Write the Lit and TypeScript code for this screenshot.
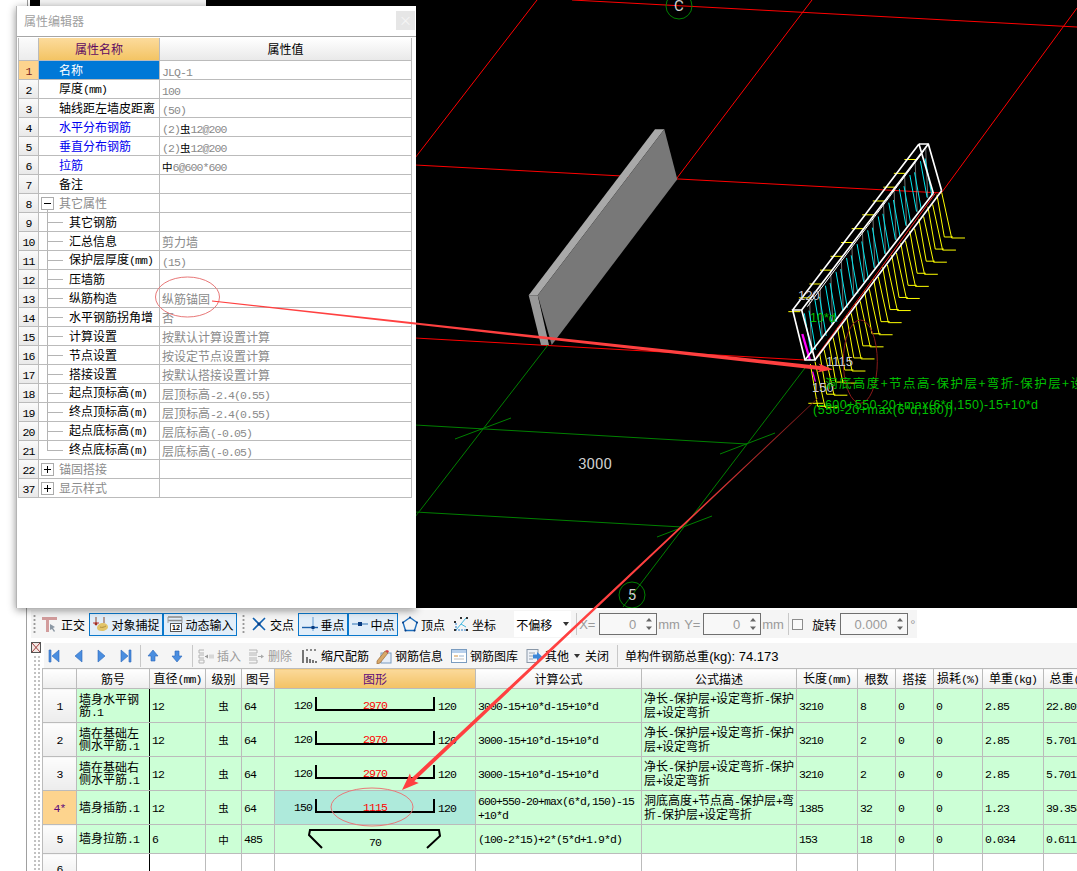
import { LitElement, html, css, svg } from "lit";
import { customElement } from "lit/decorators.js";

const t = (s: string) =>
  s
    .split(/([\x20-\x7e]+)/)
    .filter(Boolean)
    .map((p) => (/^[\x20-\x7e]/.test(p) ? html`<span class="l">${p}</span>` : p));

const rebar = (s: string) =>
  s
    .split(/([虫中]|[\x20-\x7e]+)/)
    .filter(Boolean)
    .map((p) =>
      p === "虫" || p === "中"
        ? html`<span class="g">${p}</span>`
        : /^[\x20-\x7e]/.test(p)
        ? html`<span class="l">${p}</span>`
        : p
    );

const base = css`
  * {
    box-sizing: border-box;
  }
  .l {
    font-family: "Liberation Mono", monospace;
    font-size: 11.5px;
    letter-spacing: -0.9px;
  }
  .g {
    color: #000;
    font-size: 10.5px;
  }
`;

/* ---------- property editor window ---------- */
type PropRow = { n: number; name: string; value?: string; kind?: string; tree?: string };

const PROPS: PropRow[] = [
  { n: 1, name: "名称", value: "JLQ-1", kind: "sel" },
  { n: 2, name: "厚度(mm)", value: "100" },
  { n: 3, name: "轴线距左墙皮距离", value: "(50)" },
  { n: 4, name: "水平分布钢筋", value: "(2)虫12@200", kind: "blue" },
  { n: 5, name: "垂直分布钢筋", value: "(2)虫12@200", kind: "blue" },
  { n: 6, name: "拉筋", value: "中6@600*600", kind: "blue" },
  { n: 7, name: "备注" },
  { n: 8, name: "其它属性", kind: "group", tree: "minus" },
  { n: 9, name: "其它钢筋", tree: "child" },
  { n: 10, name: "汇总信息", value: "剪力墙", tree: "child" },
  { n: 11, name: "保护层厚度(mm)", value: "(15)", tree: "child" },
  { n: 12, name: "压墙筋", tree: "child" },
  { n: 13, name: "纵筋构造", value: "纵筋锚固", tree: "child" },
  { n: 14, name: "水平钢筋拐角增", value: "否", tree: "child" },
  { n: 15, name: "计算设置", value: "按默认计算设置计算", tree: "child" },
  { n: 16, name: "节点设置", value: "按设定节点设置计算", tree: "child" },
  { n: 17, name: "搭接设置", value: "按默认搭接设置计算", tree: "child" },
  { n: 18, name: "起点顶标高(m)", value: "层顶标高-2.4(0.55)", tree: "child" },
  { n: 19, name: "终点顶标高(m)", value: "层顶标高-2.4(0.55)", tree: "child" },
  { n: 20, name: "起点底标高(m)", value: "层底标高(-0.05)", tree: "child" },
  { n: 21, name: "终点底标高(m)", value: "层底标高(-0.05)", tree: "last" },
  { n: 22, name: "锚固搭接", kind: "group", tree: "plus" },
  { n: 37, name: "显示样式", kind: "group", tree: "plus" },
];

@customElement("prop-editor")
export class PropEditor extends LitElement {
  static styles = [
    base,
    css`
      :host {
        display: block;
        width: 399px;
        height: 602px;
        background: #fff;
        border-left: 1px solid #b4b4b4;
        box-shadow: 0 2px 8px rgba(0, 0, 0, 0.45);
        font: 12px "Noto Sans CJK SC", sans-serif;
        color: #000;
      }
      .title {
        height: 31px;
        display: flex;
        align-items: center;
        justify-content: space-between;
        padding: 0 1px 1px 7px;
        color: #a0a0a0;
        border-bottom: 1px solid #a6a6a6;
      }
      .close {
        width: 19px;
        height: 19px;
        background: #e6e6e6;
        color: #f6f6f6;
        text-align: center;
        line-height: 18px;
        font-size: 13px;
      }
      .grid {
        margin: 1px 0 0 1px;
        width: 394px;
        border-left: 1px solid #bbb;
      }
      .row {
        display: grid;
        grid-template-columns: 20px 121px 252px;
        height: 19px;
        border-bottom: 1px solid #bbb;
        line-height: 20px;
      }
      .row > div {
        border-right: 1px solid #bbb;
        white-space: nowrap;
        overflow: hidden;
      }
      .head {
        height: 23px;
        line-height: 22px;
        text-align: center;
      }
      .head .num {
        background: linear-gradient(#fbfbfb, #ececec);
      }
      .head .on {
        background: linear-gradient(#fcdb9c, #f3c464);
        color: #5e0a62;
      }
      .head .val {
        background: linear-gradient(#fff, #e9e9e9);
      }
      .num {
        background: linear-gradient(#fafafa, #e9e9e9);
        text-align: center;
        line-height: 18px;
      }
      .num.sel {
        background: #fdd48e;
        color: #7a1f1f;
      }
      .name {
        padding-left: 20px;
        display: flex;
        align-items: center;
      }
      .name.sel {
        background: #0078d7;
        color: #fff;
      }
      .name.blue {
        color: #0000f0;
      }
      .name.group {
        padding-left: 2px;
        color: #8c8c8c;
      }
      .name.child,
      .name.last {
        padding-left: 30px;
        background: linear-gradient(#b4b4b4, #b4b4b4) 8px 0 / 1px 100% no-repeat,
          linear-gradient(#b4b4b4, #b4b4b4) 8px 50% / 16px 1px no-repeat;
      }
      .name.last {
        background: linear-gradient(#b4b4b4, #b4b4b4) 8px 0 / 1px 50% no-repeat,
          linear-gradient(#b4b4b4, #b4b4b4) 8px 50% / 16px 1px no-repeat;
      }
      .name.minus {
        background: linear-gradient(#b4b4b4, #b4b4b4) 8px 100% / 1px 4px no-repeat;
      }
      .box {
        width: 13px;
        height: 13px;
        margin-right: 5px;
        background: #fff;
        border: 1px solid #ababab;
        flex: none;
      }
      .box svg {
        display: block;
      }
      .value {
        padding-left: 2px;
        color: #8a8a8a;
      }
    `,
  ];
  render() {
    return html`
      <div class="title"><span>属性编辑器</span><span class="close">×</span></div>
      <div class="grid">
        <div class="row head">
          <div class="num"></div>
          <div class="on">属性名称</div>
          <div class="val">属性值</div>
        </div>
        ${PROPS.map(
          (r) => html`
            <div class="row">
              <div class="num ${r.kind === "sel" ? "sel" : ""}"><span class="l">${r.n}</span></div>
              <div class="name ${r.kind ?? ""} ${r.tree ?? ""}">
                ${r.tree === "minus" || r.tree === "plus"
                  ? html`<span class="box"
                      ><svg width="11" height="11" viewBox="0 0 11 11">
                        <path d="M2 5.5h7${r.tree === "plus" ? "M5.5 2v7" : ""}" stroke="#000" />
                      </svg></span
                    >`
                  : ""}
                <span>${t(r.name)}</span>
              </div>
              <div class="value">${r.value ? rebar(r.value) : ""}</div>
            </div>
          `
        )}
      </div>
    `;
  }
}

/* ---------- 3D viewport drawing ---------- */
const P = (k: number) => [95 + 380 * k, 540 - 498 * k];
const Q = (k: number) => [135 + 380 * k, 690 - 508 * k];
const steps = (n: number) => Array.from({ length: n + 1 }, (_, i) => i / n);

const wireframe = svg`
  <g transform="translate(770 130) scale(.3333)" fill="none">
    ${steps(14).map((k) => {
      const q = Q(k);
      return svg`
        <path d="M${q[0]} ${q[1] + 5}L${q[0] + 30} ${q[1] + 142}H${q[0] + 70}" stroke="#ffff00" stroke-width="3"/>
        <path d="M${q[0] - 14} ${q[1] + 12}L${q[0] + 8} ${q[1] + 139}H${q[0] + 34}" stroke="#ffff00" stroke-width="3"/>
      `;
    })}
    <path d="M115 820H160" stroke="#ffff00" stroke-width="3"/>
    ${steps(12).slice(0, 12).map((k) => {
      const p = P(k);
      const q = Q(k);
      const p2 = P(k + 1 / 12);
      return svg`
        <path d="M${q[0] - 10} ${q[1] - 20}L${p2[0] - 8} ${p2[1] + 8}" stroke="#a8a8a8" stroke-width="2"/>
        <path d="M${p[0] + 8} ${p[1] + 10}L${q[0] - 12} ${q[1] - 22}" stroke="#00e8f0" stroke-width="3"/>
        <path d="M${p[0] + 22} ${p[1] + 2}L${q[0] + 2} ${q[1] - 30}" stroke="#00e8f0" stroke-width="3"/>
        <path d="M${p[0] - 40} ${p[1] + 5}h36" stroke="#ffff00" stroke-width="3"/>
      `;
    })}
    <path d="M138 682L496 190" stroke="#ff2020" stroke-width="3"/>
    <path d="M97 612L120 690" stroke="#ff00ff" stroke-width="7"/>
    <path d="M128 725L136 755" stroke="#ff00ff" stroke-width="4"/>
    <g stroke="#fff" stroke-width="5">
      <path d="M68 540H95L135 690H105Z"/>
      <path d="M447 42H475L515 182"/>
      <path d="M68 540L447 42M95 540L475 42M135 690L515 182M105 690L490 190M447 42L490 190"/>
      <path d="M112 530L462 62" stroke-width="3"/>
    </g>
    <ellipse cx="271" cy="695" rx="51" ry="125" stroke="#8c1a1a" stroke-width="3"/>
  </g>
`;

@customElement("model-view")
export class ModelView extends LitElement {
  static styles = css`
    :host {
      display: block;
      height: 608px;
    }
    svg {
      display: block;
    }
    text {
      font-family: "Liberation Sans", sans-serif;
    }
    .dim {
      fill: #d0d0d0;
      font-size: 15px;
      font-family: "Roboto", sans-serif;
    }
    .green {
      fill: #00c000;
      font-size: 12.5px;
    }
    .cjk {
      font-family: "Noto Sans CJK SC", sans-serif;
    }
    .small {
      fill: #c8c8d8;
      font-size: 13px;
    }
  `;
  render() {
    return html`
      <svg width="1077" height="608" viewBox="0 0 1077 608" fill="none">
        <rect x="27" width="1" height="6" fill="#999" />
        <rect x="30" width="10" height="6" fill="#000" />
        <rect x="40" width="166" height="6" fill="#f2f2f2" />
        <rect x="206" width="871" height="608" fill="#000" />
        <g stroke="#f00" stroke-width="1">
          <path d="M572 0L1077 27" />
          <path d="M537 0L415 158" />
          <path d="M812 0L677 178" />
          <path d="M415 165L942 193" />
          <path d="M942 192L1077 8" />
          <path d="M415 338L805 360" />
        </g>
        <g stroke="#008000" stroke-width="1">
          <path d="M548 345L415 517" />
          <path d="M415 425L747 444" />
          <path d="M415 512L682 527" />
          <path d="M805 368L623 607" />
          <path d="M455 439L511 418M720 454L775 433M657 537L712 516" />
          <circle cx="679" cy="6" r="13" />
          <circle cx="632" cy="595" r="13" />
        </g>
        <path d="M655 129.3H664.3L537.7 295.3H528.7Z" fill="#a9a9a9" />
        <path d="M664.3 129.3L677.3 179.3L551.7 345L537.7 295.3Z" fill="#787878" />
        <path d="M528.7 295.3H537.7L549 345H541Z" fill="#999" />
        ${wireframe}
        <text class="dim" x="679" y="11" text-anchor="middle">C</text>
        <text class="dim" x="632" y="600" text-anchor="middle">5</text>
        <text class="dim" x="595" y="469" text-anchor="middle">3000</text>
        <text class="small" x="798" y="300">120</text>
        <text class="green" x="810" y="322">10*d</text>
        <text class="small" x="826" y="366">1115</text>
        <text class="small" x="812" y="392">150</text>
        <text class="green cjk" x="825" y="388" textLength="258">洞底高度+节点高-保护层+弯折-保护层+设</text>
        <text class="green" x="825" y="409" textLength="213">600+550-20+max(6*d,150)-15+10*d</text>
        <text class="green" x="813" y="414" textLength="140">(550-20+max(6*d,150))</text>
      </svg>
    `;
  }
}

/* ---------- toolbar icons ---------- */
const ic = (inner: unknown) =>
  html`<svg class="ic" width="16" height="16" viewBox="0 0 16 16" fill="none">${inner}</svg>`;

const I = {
  ortho: ic(svg`<path d="M0 1h15v3H7v12H4V4H0z" fill="#d29c9c"/><path d="M8 8l5 3-2 1 2 3-1 1-2-3-2 1z" fill="#8c98a4"/>`),
  snap: ic(svg`<path d="M3 1v8M11 1v6" stroke="#8a4a30"/><path d="M0 7h6" stroke="#c03030"/><circle cx="3" cy="8" r="1.4" fill="#a03020"/><path d="M4 12c0-3 3-5 6-5s5 2 5 4-3 4-6 4-5-1-5-3z" fill="#e2c468"/><path d="M7 11c2 1 4 0 6-1" stroke="#b0903c"/>`),
  dyn: ic(svg`<path d="M1 1h14M1 4.500h14" stroke="#8c8c8c" stroke-width="1.400"/><path d="M1 1v6M15 1v6" stroke="#9c9c9c"/><rect x="3.500" y="7.500" width="11" height="8" fill="#fff" stroke="#555"/><text x="9" y="14" font-size="7" font-weight="700" text-anchor="middle" fill="#000" font-family="Liberation Sans">12</text>`),
  cross: ic(svg`<path d="M2 2l12 12M14 2L2 14" stroke="#1060b0" stroke-width="1.600"/><circle cx="8" cy="8" r="1.600" fill="#0a3c80"/>`),
  perp: ic(svg`<path d="M11 1v14" stroke="#8cb8e0" stroke-width="1.500"/><path d="M0 11.500h16" stroke="#1a5ea8" stroke-width="1.400"/><rect x="9.500" y="10" width="3" height="3" fill="#0a3c80"/>`),
  mid: ic(svg`<path d="M0 8h16" stroke="#6a9ccc" stroke-width="1.500"/><rect x="6" y="6" width="4" height="4" fill="#0a3c80"/>`),
  vert: ic(svg`<path d="M8 1.500L15 6.500 12.500 14.500H3.500L1 6.500Z" stroke="#1e6fbe" stroke-width="1.400"/><g fill="#0a3c80"><circle cx="8" cy="1.500" r="1"/><circle cx="1" cy="6.500" r="1"/><circle cx="15" cy="6.500" r="1"/><circle cx="3.500" cy="14.500" r="1"/><circle cx="12.500" cy="14.500" r="1"/></g>`),
  coord: ic(svg`<path d="M3 14L8 8 13 11M8 8L13 2" stroke="#40b8e0"/><path d="M3 7v7h10" stroke="#2a7cc8" stroke-dasharray="2 1"/><g fill="#333"><rect x="1" y="5" width="2" height="2"/><rect x="7" y="1" width="2" height="2"/><rect x="13" y="1" width="2" height="2"/><rect x="1" y="13" width="2" height="2"/><rect x="13" y="13" width="2" height="2"/></g>`),
  ins: ic(svg`<path d="M1 2h5M1 2v3h5M1 7h5M1 7v3h5M1 12h5v3H1z" stroke="#b4b4b4"/><path d="M7 8.500h3" stroke="#999"/><path d="M7 8.500l3-2v4z" fill="#999"/><rect x="11" y="6.500" width="5" height="4" fill="#d8d8d8"/>`),
  del: ic(svg`<path d="M0 2h8v3H0M0 7h8M0 10h8M0 12h8v3H0" stroke="#b4b4b4"/><path d="M9 8.500h3" stroke="#aaa"/><path d="M15 8.500l-3-2v4z" fill="#aaa"/>`),
  scale: ic(svg`<path d="M1 2v13M5 9v6M8 11v4M11 12v3M14 13v2" stroke="#222" stroke-width="1.200"/><path d="M4 2h2M8 2h2M12 2h2" stroke="#222" stroke-width="1.200"/>`),
  info: ic(svg`<rect x="5" y="5" width="10" height="10" fill="#e8eef6" stroke="#7a9cc0"/><path d="M1 13L9 3l3 2-8 10-3 1z" fill="#d8a868" stroke="#9a6a38" stroke-width=".7"/><path d="M9 3l3 2 1-2-2-1z" fill="#d04040"/>`),
  lib: ic(svg`<rect x=".5" y="1.500" width="15" height="13" fill="#fff" stroke="#7a9cc0"/><rect x="1" y="2" width="14" height="3" fill="#b8d0ec"/><path d="M3 8h4" stroke="#d09040"/><path d="M8 8h5" stroke="#9ab4d0"/><path d="M3 11h10" stroke="#c0c0c0"/>`),
  other: ic(svg`<rect x="1" y="1.500" width="11" height="13" fill="#eef2f8" stroke="#8a98a8"/><path d="M3 5h6M3 8h4M3 11h4" stroke="#9aa4b0"/><path d="M7 6.500h4V4l5 4.500-5 4.500v-2.500H7z" fill="#3a86d8"/>`),
};

const nav = (d: string) =>
  html`<svg width="12" height="16" viewBox="0 0 12 16"><path d="${d}" fill="#4a8ee0" stroke="#2a66b8" stroke-width=".6" /></svg>`;

const spin = html`<span class="arrows">
  <svg width="8" height="5" viewBox="0 0 8 5"><path d="M1 4.500L4 1l3 3.500z" fill="#666" /></svg>
  <svg width="8" height="5" viewBox="0 0 8 5"><path d="M1 .5L4 4l3-3.500z" fill="#666" /></svg>
</span>`;

/* ---------- rebar table ---------- */
type Fig = { l: string; m: string; r: string } | "tie";
type Bar = {
  no: string; name: string; d: string; grade: string; code: string; fig: Fig; formula: string;
  desc: string; len: string; count: string; lap: string; loss: string; unit: string; total: string; cur?: boolean;
};
const D1 = "净长-保护层+设定弯折-保护层+设定弯折";
const F1 = "3000-15+10*d-15+10*d";
const BARS: Bar[] = [
  { no: "1", name: "墙身水平钢筋.1", d: "12", grade: "虫", code: "64", fig: { l: "120", m: "2970", r: "120" }, formula: F1, desc: D1, len: "3210", count: "8", lap: "0", loss: "0", unit: "2.85", total: "22.801" },
  { no: "2", name: "墙在基础左侧水平筋.1", d: "12", grade: "虫", code: "64", fig: { l: "120", m: "2970", r: "120" }, formula: F1, desc: D1, len: "3210", count: "2", lap: "0", loss: "0", unit: "2.85", total: "5.701" },
  { no: "3", name: "墙在基础右侧水平筋.1", d: "12", grade: "虫", code: "64", fig: { l: "120", m: "2970", r: "120" }, formula: F1, desc: D1, len: "3210", count: "2", lap: "0", loss: "0", unit: "2.85", total: "5.701" },
  { no: "4*", name: "墙身插筋.1", d: "12", grade: "虫", code: "64", fig: { l: "150", m: "1115", r: "120" }, formula: "600+550-20+max(6*d,150)-15\n+10*d", desc: "洞底高度+节点高-保护层+弯折-保护层+设定弯折", len: "1385", count: "32", lap: "0", loss: "0", unit: "1.23", total: "39.358", cur: true },
  { no: "5", name: "墙身拉筋.1", d: "6", grade: "中", code: "485", fig: "tie", formula: "(100-2*15)+2*(5*d+1.9*d)", desc: "", len: "153", count: "18", lap: "0", loss: "0", unit: "0.034", total: "0.611" },
];
const COLS = [34, 73, 56, 36, 33, 201, 166, 155, 61, 38, 38, 49, 61, 60];
const HEADS = ["", "筋号", "直径(mm)", "级别", "图号", "图形", "计算公式", "公式描述", "长度(mm)", "根数", "搭接", "损耗(%)", "单重(kg)", "总重(kg)"];

@customElement("rebar-panel")
export class RebarPanel extends LitElement {
  static styles = [
    base,
    css`
      :host {
        display: block;
        margin-left: 26px;
        border-left: 1px solid #a0a0a0;
        height: 263px;
        overflow: hidden;
        font: 12px "Noto Sans CJK SC", sans-serif;
        color: #000;
      }
      .bar1 {
        margin: 2px 0 2px 4px;
        width: 886px;
        height: 28px;
        background: #f5f5f5;
        display: flex;
        align-items: center;
        padding-left: 2px;
      }
      .grip {
        width: 3px;
        height: 20px;
        flex: none;
        background: radial-gradient(circle, #999 1px, transparent 1.2px) 0 0 / 3px 4px;
      }
      .g1 {
        margin-right: 2px;
      }
      .g2 {
        margin: 0 2px 0 5px;
      }
      .tool {
        display: flex;
        align-items: center;
        gap: 3px;
        height: 23px;
        padding: 0 3px;
        border: 1px solid transparent;
        flex: none;
        white-space: nowrap;
      }
      .tool.on {
        border: 1.5px solid #0a78cc;
        background: #e2eef9;
        padding: 0 2.5px;
      }
      .ic {
        flex: none;
        display: block;
      }
      .select {
        margin-left: 14px;
        width: 57px;
        height: 26px;
        background: #fff;
        display: flex;
        align-items: center;
        justify-content: space-between;
        padding: 0 2px;
        flex: none;
      }
      .sep {
        width: 1px;
        height: 22px;
        background: #c8c8c8;
        flex: none;
      }
      .dimtxt {
        color: #9a9a9a;
        font-family: "Liberation Sans", sans-serif;
        font-size: 13px;
        white-space: nowrap;
        flex: none;
      }
      .d19 {
        width: 19px;
      }
      .d20 {
        width: 20px;
      }
      .d26 {
        width: 26px;
      }
      .ml1 {
        margin-left: 1px;
      }
      .ml2 {
        margin-left: 2px;
      }
      .ml3 {
        margin-left: 3px;
      }
      .turn {
        margin-left: 9px;
        width: 28px;
        flex: none;
      }
      .input {
        height: 22px;
        border: 1.5px solid #707070;
        background: #f8f8f8;
        display: flex;
        align-items: center;
        justify-content: flex-end;
        color: #9a9a9a;
        font-family: "Liberation Sans", sans-serif;
        font-size: 13px;
        flex: none;
      }
      .input.w58 {
        width: 58px;
      }
      .input.w68 {
        width: 68px;
      }
      .arrows {
        width: 14px;
        display: flex;
        flex-direction: column;
        align-items: center;
        gap: 4px;
        margin-left: 6px;
      }
      .arrows svg {
        display: block;
      }
      .check {
        width: 11px;
        height: 11px;
        border: 1px solid #8c8c8c;
        background: #fafafa;
        flex: none;
      }
      .lower {
        display: flex;
        height: 231px;
      }
      .strip {
        width: 15px;
        flex: none;
        padding: 2px 0 0 4px;
      }
      .strip svg {
        display: block;
      }
      .dots {
        width: 8px;
        height: 215px;
        margin: 3px 0 0 1px;
        background: conic-gradient(#c2c2c2 25%, transparent 0) 0 0 / 4px 4px;
      }
      .main {
        flex: 1;
        min-width: 0;
        overflow: hidden;
      }
      .bar2 {
        margin: 3px 0 0 2px;
        height: 25px;
        background: #f5f5f5;
        display: flex;
        align-items: center;
        padding-left: 4px;
        white-space: nowrap;
      }
      .navs {
        display: flex;
        gap: 12px;
        align-items: center;
      }
      .m6 {
        margin-left: 6px;
      }
      .m8 {
        margin-left: 8px;
      }
      .m9 {
        margin-left: 9px;
      }
      .m5 {
        margin-left: 5px;
      }
      .m10 {
        margin-left: 10px;
      }
      .m7 {
        margin-left: 7px;
      }
      .item {
        display: flex;
        align-items: center;
        gap: 3px;
        flex: none;
      }
      .item.off {
        color: #9c9c9c;
      }
      .caret {
        width: 0;
        height: 0;
        border: 3px solid transparent;
        border-top: 4px solid #333;
        border-bottom: 0;
        margin-left: 2px;
        flex: none;
      }
      .weight {
        font-family: "Liberation Sans", sans-serif;
        font-size: 13px;
      }
      .weight .cn {
        font-family: "Noto Sans CJK SC", sans-serif;
        font-size: 12px;
      }
      table {
        table-layout: fixed;
        border-collapse: collapse;
        width: 1062px;
      }
      th,
      td {
        border: 1px solid #bbb;
        padding: 0 2px;
        font-weight: 400;
        line-height: 12px;
        overflow: hidden;
        background: #ccffd6;
      }
      th {
        height: 20px;
        background: linear-gradient(#fff, #ededed);
        text-align: center;
        white-space: nowrap;
      }
      th.on {
        background: linear-gradient(#fbd99a, #f3c264);
        color: #5e0a7a;
      }
      tbody tr {
        height: 34px;
      }
      tbody tr.tie {
        height: 29px;
      }
      tbody tr.blank {
        height: 30px;
      }
      td.no {
        text-align: center;
        background: linear-gradient(#fdfdfd, #ececec);
      }
      td.no.cur {
        background: #fdd48e;
        color: #5e0a7a;
      }
      td.c {
        text-align: center;
      }
      td.frozen {
        border-right: 1px solid #000;
      }
      td.pre {
        white-space: pre-line;
      }
      td.desc {
        padding-right: 0;
      }
      td.fig {
        padding: 0;
      }
      td.fig.bent {
        vertical-align: top;
      }
      td.fig.cur {
        background: #aeeadb;
      }
      .fig-row {
        display: flex;
        justify-content: center;
        align-items: flex-start;
        padding-top: 8px;
      }
      .nl {
        width: 40px;
        text-align: right;
        padding: 1px 3px 0 0;
      }
      .nr {
        width: 40px;
        padding: 2px 0 0 3px;
      }
      .shape {
        width: 120px;
        height: 14px;
        border: 2px solid #000;
        border-top: 0;
        text-align: center;
        color: #f00;
        line-height: 13px;
      }
      td.blank {
        background: #fff;
      }
      .tieshape {
        display: grid;
        justify-items: center;
        align-items: center;
      }
      .tieshape > * {
        grid-area: 1 / 1;
      }
      .tieshape svg {
        display: block;
      }
      .tielabel {
        padding-top: 5px;
      }
    `,
  ];

  private tool(icon: unknown, label: string, on = false) {
    return html`<span class="tool ${on ? "on" : ""}">${icon}<span>${label}</span></span>`;
  }

  private figure(b: Bar) {
    if (b.fig === "tie") {
      return html`<div class="tieshape">
        <svg width="134" height="22" viewBox="0 0 134 22" fill="none">
          <path d="M14 20L1 7 2 2H131L132 8 119 20" stroke="#000" stroke-width="2" />
        </svg>
        <span class="tielabel"><span class="l">70</span></span>
      </div>`;
    }
    return html`<div class="fig-row">
      <span class="nl"><span class="l">${b.fig.l}</span></span>
      <div class="shape"><span class="l">${b.fig.m}</span></div>
      <span class="nr"><span class="l">${b.fig.r}</span></span>
    </div>`;
  }

  render() {
    return html`
      <div class="bar1">
        <span class="grip g1"></span>
        ${this.tool(I.ortho, "正交")} ${this.tool(I.snap, "对象捕捉", true)} ${this.tool(I.dyn, "动态输入", true)}
        <span class="grip g2"></span>
        ${this.tool(I.cross, "交点")} ${this.tool(I.perp, "垂点", true)} ${this.tool(I.mid, "中点", true)}
        ${this.tool(I.vert, "顶点")} ${this.tool(I.coord, "坐标")}
        <span class="select"><span>不偏移</span><span class="caret"></span></span>
        <span class="sep m5"></span>
        <span class="dimtxt ml2 d20">X=</span>
        <span class="input w58">0${spin}</span>
        <span class="dimtxt ml1 d26">mm</span>
        <span class="dimtxt d19">Y=</span>
        <span class="input w58">0${spin}</span>
        <span class="dimtxt ml1 d26">mm</span>
        <span class="sep"></span>
        <span class="check ml3"></span>
        <span class="turn">旋转</span>
        <span class="input w68">0.000${spin}</span>
        <span class="dimtxt ml2">°</span>
      </div>
      <div class="lower">
        <div class="strip">
          <svg width="10" height="11" viewBox="0 0 10 11" fill="none">
            <rect x=".5" y=".5" width="9" height="10" fill="#f4e8e4" stroke="#555" />
            <path d="M1 1l8 9M9 1l-8 9" stroke="#a04040" />
          </svg>
          <div class="dots"></div>
        </div>
        <div class="main">
          <div class="bar2">
            <span class="navs">
              ${nav("M1 2h2v12H1zM11 2v12L4 8z")} ${nav("M10 2v12L3 8z")} ${nav("M2 2v12l7-6z")}
              ${nav("M1 2v12l7-6zM9 2h2v12H9z")}
            </span>
            <span class="sep m8"></span>
            <span class="navs m6">
              ${nav("M6 2l5 6H8v5H4V8H1z")} ${nav("M6 14L1 8h3V3h4v5h3z")}
            </span>
            <span class="sep m9"></span>
            <span class="item off m5">${I.ins}<span>插入</span></span>
            <span class="item off m8">${I.del}<span>删除</span></span>
            <span class="item m10">${I.scale}<span>缩尺配筋</span></span>
            <span class="item m7">${I.info}<span>钢筋信息</span></span>
            <span class="item m8">${I.lib}<span>钢筋图库</span></span>
            <span class="item m8">${I.other}<span>其他</span><span class="caret"></span></span>
            <span class="item m5">关闭</span>
            <span class="sep m8"></span>
            <span class="weight m7"><span class="cn">单构件钢筋总重</span>(kg): 74.173</span>
          </div>
          <table>
            <colgroup>${COLS.map((w) => html`<col style="width:${w}px" />`)}</colgroup>
            <thead>
              <tr>${HEADS.map((h, i) => html`<th class="${i === 5 ? "on" : ""}">${t(h)}</th>`)}</tr>
            </thead>
            <tbody>
              ${BARS.map(
                (b) => html`
                  <tr class="${b.fig === "tie" ? "tie" : ""}">
                    <td class="no ${b.cur ? "cur" : ""}"><span class="l">${b.no}</span></td>
                    <td class="frozen">${t(b.name)}</td>
                    <td>${t(b.d)}</td>
                    <td class="c"><span class="g">${b.grade}</span></td>
                    <td>${t(b.code)}</td>
                    <td class="fig ${b.fig === "tie" ? "" : "bent"} ${b.cur ? "cur" : ""}">${this.figure(b)}</td>
                    <td class="pre">${t(b.formula)}</td>
                    <td class="desc">${t(b.desc)}</td>
                    <td>${t(b.len)}</td>
                    <td>${t(b.count)}</td>
                    <td>${t(b.lap)}</td>
                    <td>${t(b.loss)}</td>
                    <td>${t(b.unit)}</td>
                    <td>${t(b.total)}</td>
                  </tr>
                `
              )}
              <tr class="blank">
                <td class="no"><span class="l">6</span></td>
                <td class="blank frozen"></td>
                ${COLS.slice(2).map(() => html`<td class="blank"></td>`)}
              </tr>
            </tbody>
          </table>
        </div>
      </div>
    `;
  }
}

/* ---------- annotation arrows ---------- */
function arrow(x0: number, y0: number, x1: number, y1: number, w0: number, w1: number, hl: number, hw: number) {
  const len = Math.hypot(x1 - x0, y1 - y0);
  const ux = (x1 - x0) / len;
  const uy = (y1 - y0) / len;
  const nx = -uy;
  const ny = ux;
  const bx = x1 - ux * hl;
  const by = y1 - uy * hl;
  const pts = [
    [x0 + (nx * w0) / 2, y0 + (ny * w0) / 2],
    [bx + (nx * w1) / 2, by + (ny * w1) / 2],
    [bx + (nx * hw) / 2 - ux * 2, by + (ny * hw) / 2 - uy * 2],
    [x1, y1],
    [bx - (nx * hw) / 2 - ux * 2, by - (ny * hw) / 2 - uy * 2],
    [bx - (nx * w1) / 2, by - (ny * w1) / 2],
    [x0 - (nx * w0) / 2, y0 - (ny * w0) / 2],
  ];
  return pts.map((p) => p.map((v) => v.toFixed(1)).join(",")).join(" ");
}

@customElement("app-root")
export class AppRoot extends LitElement {
  static styles = css`
    :host {
      display: block;
      position: relative;
      width: 1077px;
      height: 871px;
      overflow: hidden;
      background: #fff;
    }
    prop-editor {
      position: absolute;
      left: 16px;
      top: 6px;
    }
    .marks {
      position: absolute;
      left: 0;
      top: 0;
      pointer-events: none;
    }
  `;
  render() {
    return html`
      <model-view></model-view>
      <rebar-panel></rebar-panel>
      <prop-editor></prop-editor>
      <svg class="marks" width="1077" height="871" viewBox="0 0 1077 871" fill="none">
        <defs>
          <linearGradient id="fade" gradientUnits="userSpaceOnUse" x1="818" y1="398" x2="680" y2="528">
            <stop offset="0" stop-color="#6a1616" />
            <stop offset="1" stop-color="#ff4040" />
          </linearGradient>
        </defs>
        <ellipse cx="187.500" cy="297" rx="32" ry="20" stroke="#e87878" />
        <ellipse cx="372" cy="807" rx="41" ry="19" stroke="#e87878" />
        <polygon points="${arrow(212, 301, 833, 369.5, 1, 4, 13, 9)}" fill="#ff4040" />
        <polygon points="${arrow(818, 398, 402, 790, 0.6, 4, 15, 13)}" fill="url(#fade)" />
      </svg>
    `;
  }
}
